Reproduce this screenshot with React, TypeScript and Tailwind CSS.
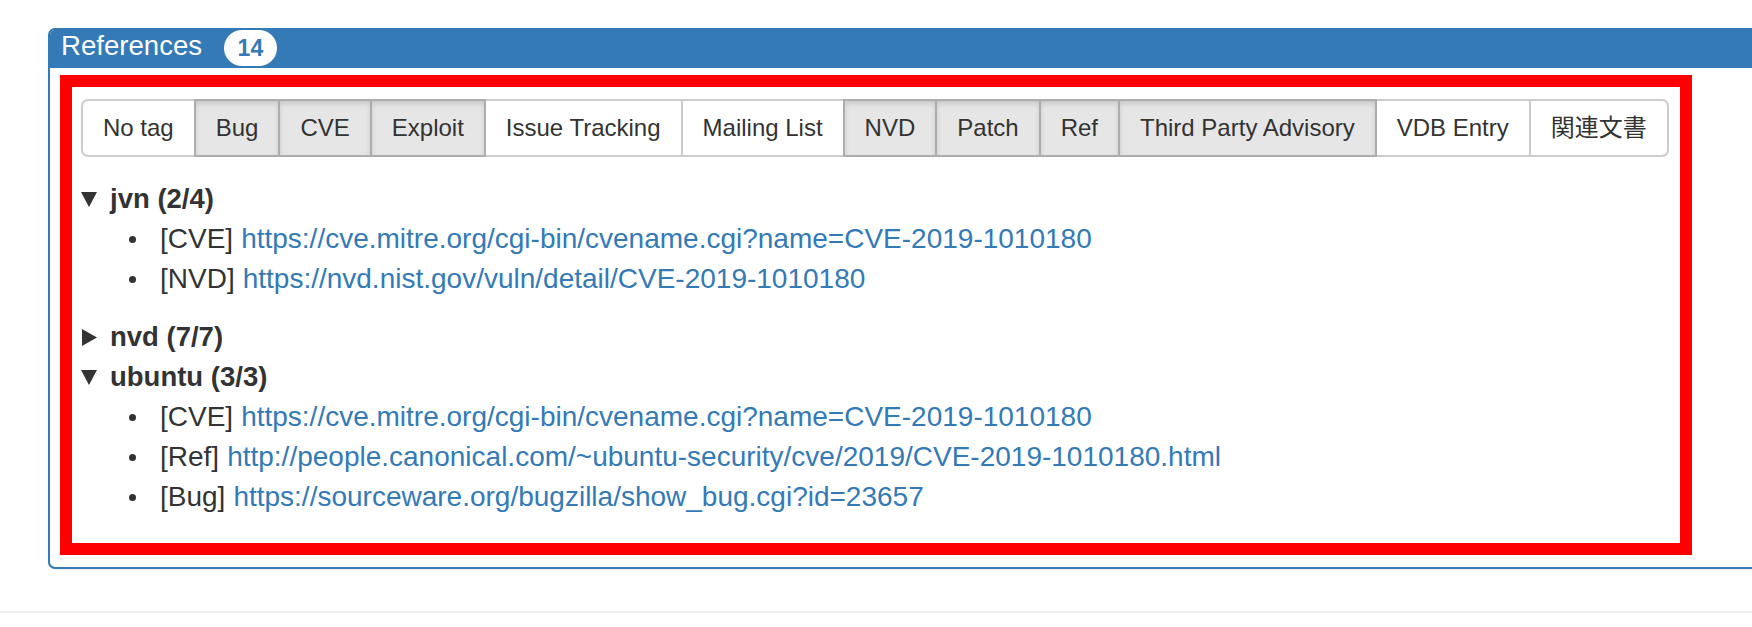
import React from 'react';

type Tag = { label: string; active: boolean };

const tags: Tag[] = [
  { label: 'No tag', active: false },
  { label: 'Bug', active: true },
  { label: 'CVE', active: true },
  { label: 'Exploit', active: true },
  { label: 'Issue Tracking', active: false },
  { label: 'Mailing List', active: false },
  { label: 'NVD', active: true },
  { label: 'Patch', active: true },
  { label: 'Ref', active: true },
  { label: 'Third Party Advisory', active: true },
  { label: 'VDB Entry', active: false },
  { label: '関連文書', active: false },
];

type Source = {
  name: string;
  count: string;
  open: boolean;
  refs: { tag: string; url: string }[];
};

const sources: Source[] = [
  {
    name: 'jvn',
    count: '(2/4)',
    open: true,
    refs: [
      { tag: 'CVE', url: 'https://cve.mitre.org/cgi-bin/cvename.cgi?name=CVE-2019-1010180' },
      { tag: 'NVD', url: 'https://nvd.nist.gov/vuln/detail/CVE-2019-1010180' },
    ],
  },
  { name: 'nvd', count: '(7/7)', open: false, refs: [] },
  {
    name: 'ubuntu',
    count: '(3/3)',
    open: true,
    refs: [
      { tag: 'CVE', url: 'https://cve.mitre.org/cgi-bin/cvename.cgi?name=CVE-2019-1010180' },
      { tag: 'Ref', url: 'http://people.canonical.com/~ubuntu-security/cve/2019/CVE-2019-1010180.html' },
      { tag: 'Bug', url: 'https://sourceware.org/bugzilla/show_bug.cgi?id=23657' },
    ],
  },
];

// disclosure triangle in front of each source
const Caret = ({ open }: { open: boolean }) =>
  open ? (
    <svg width="16" height="15" viewBox="0 0 16 15" className="shrink-0">
      <polygon points="0,0 16,0 8,15" fill="#333" />
    </svg>
  ) : (
    <svg width="16" height="17" viewBox="0 0 16 17" className="shrink-0">
      <polygon points="1,0 16,8.5 1,17" fill="#333" />
    </svg>
  );

export default function App() {
  return (
    <div className="w-full h-[627px] overflow-hidden bg-white text-[#333] font-['Liberation_Sans','Noto_Sans_CJK_JP',sans-serif]">
      <div className="pt-[28px] pl-[48px]">
        {/* Panel */}
        <div className="w-[1720px] rounded-[7px] border-2 border-[#337ab7] bg-white shadow-[0_1px_2px_rgba(0,0,0,0.08)]">
          <div className="h-[38px] bg-[#337ab7] rounded-t-[5px] flex items-center pl-[11px]">
            <span className="text-white text-[27.6px] leading-[30px] mb-[6px]">References</span>
            <span className="ml-[22px] mb-[2px] h-[36px] px-[13.5px] rounded-full bg-white text-[#337ab7] font-bold text-[23px] leading-[36px]">
              14
            </span>
          </div>

          <div className="pt-[7px] pl-[10px] pb-[12px]">
            <div className="w-[1632px] border-[12px] border-[#ff0000] pt-[12px] pl-[9px] pb-[26px]">
              {/* Tag filter buttons */}
              <div className="inline-flex">
                {tags.map((t, i) => (
                  <button
                    key={t.label}
                    className={
                      'px-[20px] py-[10px] text-[24px] leading-[34px] border-2 text-[#333] whitespace-nowrap ' +
                      (i > 0 ? '-ml-[2px] ' : '') +
                      (i === 0 ? 'rounded-l-[7px] ' : '') +
                      (i === tags.length - 1 ? 'rounded-r-[7px] ' : '') +
                      (t.active
                        ? 'relative z-10 bg-[#e6e6e6] border-[#adadad] shadow-[inset_0_3px_5px_rgba(0,0,0,0.125)]'
                        : 'bg-white border-[#ccc]')
                    }
                  >
                    {t.label}
                  </button>
                ))}
              </div>

              {/* Reference tree */}
              <div className="mt-[22px] text-[28px] leading-[40px]">
                {sources.map((s) => (
                  <div key={s.name} className={s.open ? 'mb-[18px] last:mb-0' : ''}>
                    <div className="flex items-center h-[40px]">
                      <Caret open={s.open} />
                      <span className="ml-[13px] font-bold text-[27.5px]">
                        {s.name} {s.count}
                      </span>
                    </div>
                    {s.open && (
                      <ul>
                        {s.refs.map((r, j) => (
                          <li key={j} className="flex items-center h-[40px] pl-[48px] whitespace-nowrap">
                            <span className="w-[7px] h-[7px] rounded-full bg-[#333] shrink-0" />
                            <span className="ml-[24px]">[{r.tag}]</span>
                            <a href="#" className="ml-[8px] text-[#337ab7]">
                              {r.url}
                            </a>
                          </li>
                        ))}
                      </ul>
                    )}
                  </div>
                ))}
              </div>
            </div>
          </div>
        </div>
      </div>
      <div className="mt-[42px] border-t-2 border-[#eee]" />
    </div>
  );
}
